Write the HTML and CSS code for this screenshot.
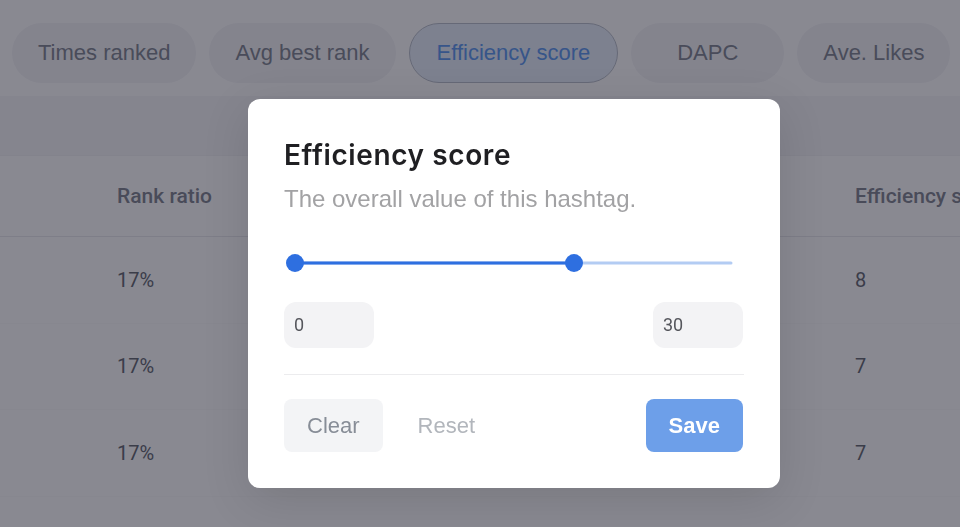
FILE: index.html
```html
<!DOCTYPE html>
<html lang="en">
<head>
<meta charset="utf-8">
<title>Efficiency score filter</title>
<link rel="stylesheet" href="styles.css">
</head>
<body>
<div class="page">
  <div class="pills">
    <span class="pill">Times ranked</span>
    <span class="pill">Avg best rank</span>
    <span class="pill pill-active">Efficiency score</span>
    <span class="pill pill-wide">DAPC</span>
    <span class="pill">Ave. Likes</span>
  </div>
  <div class="band"></div>
  <div class="table">
    <div class="row head">
      <div class="cell"></div>
      <div class="cell">Rank ratio</div>
      <div class="cell"></div>
      <div class="cell"></div>
      <div class="cell">Efficiency score</div>
    </div>
    <div class="row">
      <div class="cell"></div>
      <div class="cell">17%</div>
      <div class="cell"></div>
      <div class="cell"></div>
      <div class="cell">8</div>
    </div>
    <div class="row">
      <div class="cell"></div>
      <div class="cell">17%</div>
      <div class="cell"></div>
      <div class="cell"></div>
      <div class="cell">7</div>
    </div>
    <div class="row">
      <div class="cell"></div>
      <div class="cell">17%</div>
      <div class="cell"></div>
      <div class="cell"></div>
      <div class="cell">7</div>
    </div>
  </div>
</div>

<div class="overlay">
  <div class="modal">
    <h2 class="title">Efficiency score</h2>
    <p class="subtitle">The overall value of this hashtag.</p>
    <svg class="slider" width="460" height="20" viewBox="0 0 460 20">
      <line x1="11" y1="10" x2="447" y2="10" stroke="#b3ccf3" stroke-width="3" stroke-linecap="round"/>
      <line x1="11" y1="10" x2="290" y2="10" stroke="#2e6fe0" stroke-width="3"/>
      <circle cx="11" cy="10" r="9" fill="#2e6fe0"/>
      <circle cx="290" cy="10" r="9" fill="#2e6fe0"/>
    </svg>
    <div class="range">
      <div class="num">0</div>
      <div class="num">30</div>
    </div>
    <div class="divider"></div>
    <div class="actions">
      <button class="btn btn-clear">Clear</button>
      <button class="btn btn-reset">Reset</button>
      <button class="btn btn-save">Save</button>
    </div>
  </div>
</div>
</body>
</html>
```

FILE: styles.css
```css
* { box-sizing: border-box; }

html, body {
  margin: 0;
  padding: 0;
  width: 960px;
  height: 527px;
  overflow: hidden;
  background: #ffffff;
  font-family: "Liberation Sans", Arial, sans-serif;
}

.page {
  display: flex;
  flex-direction: column;
}

.pills {
  display: flex;
  gap: 13px;
  padding: 23px 12px 0;
  white-space: nowrap;
}

.pill {
  height: 60px;
  padding: 0 25px;
  border-radius: 30px;
  background: #f4f4f7;
  color: #7f8490;
  font-size: 22px;
  line-height: 58px;
  border: 1px solid transparent;
}

.pill-wide {
  padding: 0 45px;
}

.pill-active {
  padding: 0 27px;
  background: #e6eefb;
  border-color: #b9bfca;
  color: #5a97ef;
}

.band {
  height: 59px;
  margin-top: 13px;
  background: #f6f6f8;
}

.table {
  display: flex;
  flex-direction: column;
}

.row {
  display: grid;
  grid-template-columns: 117px 246px 246px 246px 1fr;
  height: 86.5px;
  align-items: center;
  font-family: Roboto, "Liberation Sans", sans-serif;
  font-size: 20px;
  color: #62666f;
  border-bottom: 1px solid #fafafb;
  white-space: nowrap;
}

.row.head {
  height: 82px;
  border-top: 1px solid #f2f2f5;
  border-bottom: 1px solid #e8e8ec;
  font-weight: 500;
  color: #7e838f;
  font-size: 21px;
}

.cell {
  overflow: hidden;
}

.overlay {
  position: fixed;
  inset: 0;
  background: rgba(20, 20, 36, 0.5);
  display: flex;
  align-items: flex-start;
  padding: 99px 0 0 248px;
}

.modal {
  width: 532px;
  background: #ffffff;
  border-radius: 12px;
  padding: 40px 36px 36px;
  box-shadow: 0 12px 48px rgba(0, 0, 0, 0.12);
  display: flex;
  flex-direction: column;
}

.title {
  margin: 0;
  font-family: Inter, "Liberation Sans", sans-serif;
  font-weight: 600;
  font-size: 28px;
  line-height: 32px;
  color: #1f1f22;
  letter-spacing: 0.6px;
}

.subtitle {
  margin: 14px 0 0;
  font-size: 24px;
  line-height: 28px;
  color: #a2a2a4;
}

.slider {
  display: block;
  margin-top: 40px;
}

.range {
  margin-top: 29px;
  display: flex;
  justify-content: space-between;
  padding-right: 1px;
}

.num {
  width: 90px;
  height: 46px;
  border-radius: 12px;
  background: #f3f3f5;
  padding-left: 10px;
  font-family: Roboto, "Liberation Sans", sans-serif;
  font-size: 18px;
  line-height: 46px;
  color: #55565c;
}

.divider {
  margin-top: 26px;
  height: 1px;
  background: #ececee;
}

.actions {
  margin-top: 24px;
  display: flex;
  align-items: center;
  gap: 12px;
  padding-right: 1px;
}

.btn {
  height: 53px;
  border: none;
  border-radius: 8px;
  font-family: "Liberation Sans", Arial, sans-serif;
  font-size: 22px;
  padding: 0 23px;
  background: transparent;
}

.btn-clear {
  background: #f3f4f6;
  color: #878d97;
}

.btn-reset {
  padding: 0 23px;
  color: #b2b6bc;
}

.btn-save {
  margin-left: auto;
  background: #6d9fe9;
  color: #ffffff;
  font-weight: 700;
  padding: 0 23px;
}
```
